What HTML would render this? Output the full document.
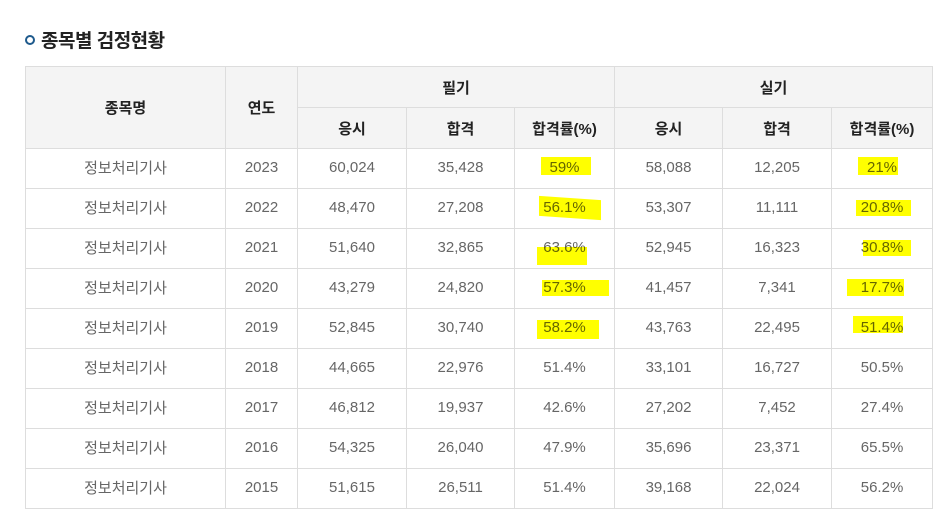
<!DOCTYPE html>
<html><head><meta charset="utf-8"><style>
body{margin:0;width:936px;height:508px;overflow:hidden;background:#fff;font-family:"Liberation Sans","Noto Sans CJK KR",sans-serif;position:relative}
.t{position:absolute;left:41px;top:26px;font-size:19px;font-weight:bold;color:#222;letter-spacing:-0.5px}
.b{position:absolute;left:25px;top:35px;width:6px;height:6px;border:2px solid #1e5a8c;border-radius:50%;background:#fff}
table{position:absolute;left:25px;top:66px;border-collapse:collapse;table-layout:fixed;width:907px}
td,th{border:1px solid #ddd;text-align:center;font-size:15px;color:#666;font-weight:normal;padding:0}
th{background:#f4f4f4;color:#222;height:40px;font-weight:bold}
td{height:37px;padding-bottom:2px}
.h{position:absolute;background:#ff0;mix-blend-mode:multiply}
</style></head><body>
<div class="b"></div><div class="t">종목별 검정현황</div>
<table>
<colgroup><col style="width:200px"><col style="width:72px"><col style="width:109px"><col style="width:108px"><col style="width:100px"><col style="width:108px"><col style="width:109px"><col style="width:101px"></colgroup>
<tr><th rowspan="2">종목명</th><th rowspan="2">연도</th><th colspan="3">필기</th><th colspan="3">실기</th></tr>
<tr><th>응시</th><th>합격</th><th>합격률(%)</th><th>응시</th><th>합격</th><th>합격률(%)</th></tr>
<tr><td>정보처리기사</td><td>2023</td><td>60,024</td><td>35,428</td><td>59%</td><td>58,088</td><td>12,205</td><td>21%</td></tr>
<tr><td>정보처리기사</td><td>2022</td><td>48,470</td><td>27,208</td><td>56.1%</td><td>53,307</td><td>11,111</td><td>20.8%</td></tr>
<tr><td>정보처리기사</td><td>2021</td><td>51,640</td><td>32,865</td><td>63.6%</td><td>52,945</td><td>16,323</td><td>30.8%</td></tr>
<tr><td>정보처리기사</td><td>2020</td><td>43,279</td><td>24,820</td><td>57.3%</td><td>41,457</td><td>7,341</td><td>17.7%</td></tr>
<tr><td>정보처리기사</td><td>2019</td><td>52,845</td><td>30,740</td><td>58.2%</td><td>43,763</td><td>22,495</td><td>51.4%</td></tr>
<tr><td>정보처리기사</td><td>2018</td><td>44,665</td><td>22,976</td><td>51.4%</td><td>33,101</td><td>16,727</td><td>50.5%</td></tr>
<tr><td>정보처리기사</td><td>2017</td><td>46,812</td><td>19,937</td><td>42.6%</td><td>27,202</td><td>7,452</td><td>27.4%</td></tr>
<tr><td>정보처리기사</td><td>2016</td><td>54,325</td><td>26,040</td><td>47.9%</td><td>35,696</td><td>23,371</td><td>65.5%</td></tr>
<tr><td>정보처리기사</td><td>2015</td><td>51,615</td><td>26,511</td><td>51.4%</td><td>39,168</td><td>22,024</td><td>56.2%</td></tr>
</table>
<div class="h" style="left:541px;top:157px;width:50px;height:18px"></div>
<div class="h" style="left:858px;top:157px;width:40px;height:18px"></div>
<div class="h" style="left:539px;top:198px;width:62px;height:20px;transform:skewY(4deg)"></div>
<div class="h" style="left:856px;top:200px;width:55px;height:16px"></div>
<div class="h" style="left:537px;top:247px;width:50px;height:18px"></div>
<div class="h" style="left:863px;top:240px;width:48px;height:16px"></div>
<div class="h" style="left:542px;top:280px;width:67px;height:16px"></div>
<div class="h" style="left:847px;top:279px;width:57px;height:17px"></div>
<div class="h" style="left:537px;top:320px;width:62px;height:19px"></div>
<div class="h" style="left:853px;top:316px;width:50px;height:17px"></div>
</body></html>
